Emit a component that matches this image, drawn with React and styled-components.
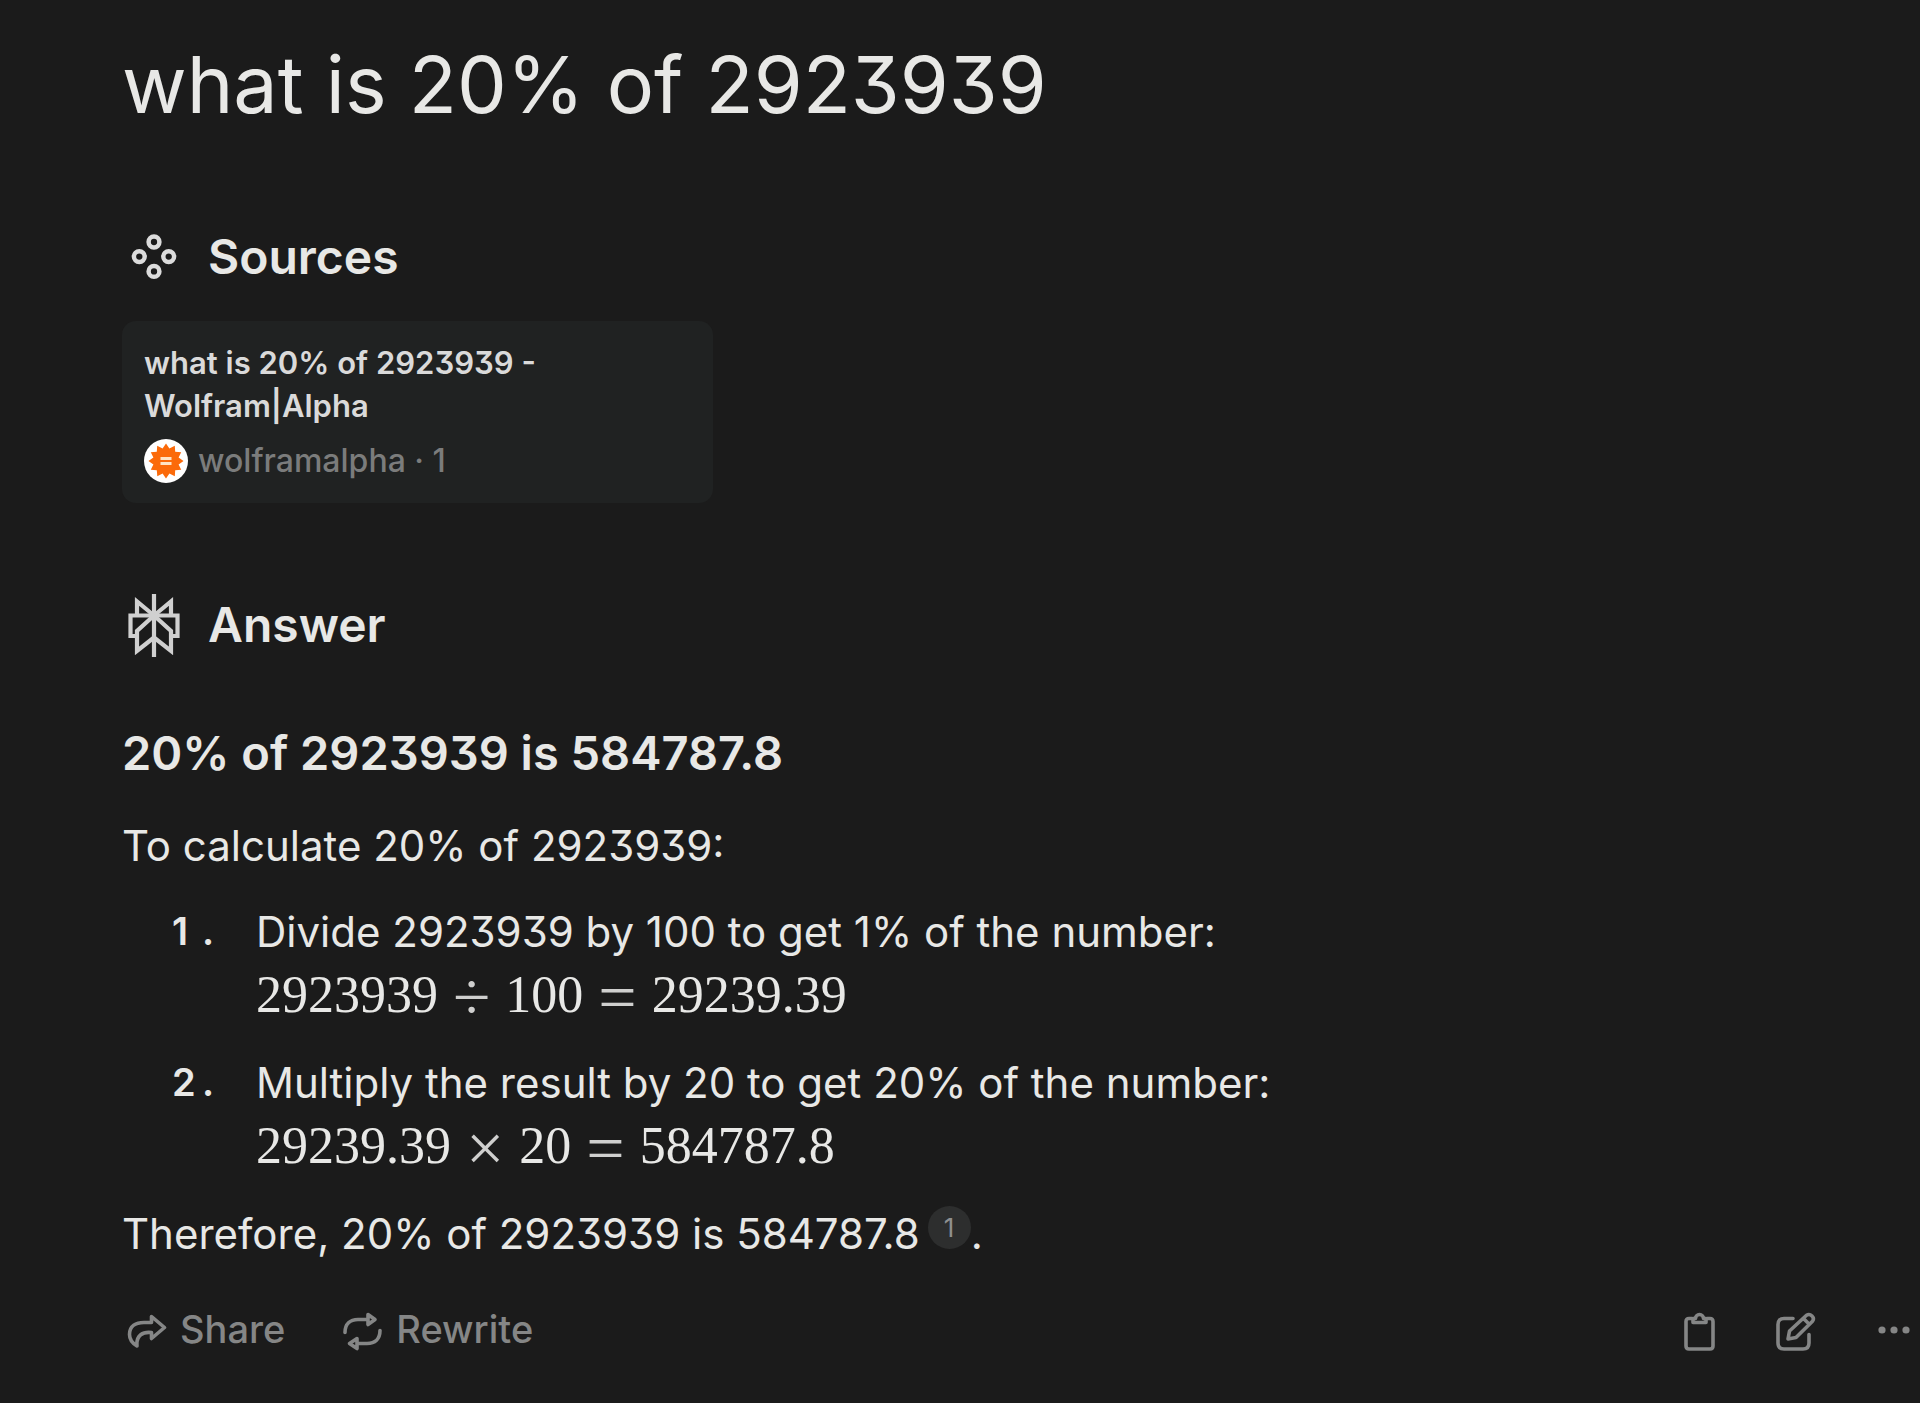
import React from "react";
import styled, { createGlobalStyle } from "styled-components";

const Global = createGlobalStyle`
  * { box-sizing: border-box; }
  body {
    margin: 0;
    background: #1b1b1b;
    color: #e8e8e6;
    font-family: Inter, "Liberation Sans", sans-serif;
    font-feature-settings: "cv09";
  }
  h1, h2, h3, p, ol { margin: 0; padding: 0; }
  a, button { font: inherit; font-feature-settings: inherit; text-decoration: none; }
`;

const Page = styled.main`
  padding: 36px 9px 48px 122px;
`;

const Title = styled.h1`
  font-size: 79px;
  line-height: 96px;
  font-weight: 400;
`;

const Section = styled.section`
  margin-top: ${(p) => p.$space}px;
`;

const SectionHead = styled.div`
  display: flex;
  align-items: center;
  gap: 28px;
  height: 48px;
  padding-left: 6px;
  svg { flex: none; }
`;

const SectionTitle = styled.h2`
  font-size: 48px;
  line-height: 48px;
  font-weight: 600;
`;

const SourceCard = styled.a`
  display: block;
  max-width: 591px;
  margin-top: 40px;
  padding: 20px 22px;
  border-radius: 14px;
  background: #202222;
  color: #dadada;
`;

const SourceTitle = styled.div`
  font-size: 31px;
  line-height: 43px;
  font-weight: 600;
`;

const SourceMeta = styled.div`
  display: flex;
  align-items: center;
  gap: 10px;
  margin-top: 12px;
  font-size: 32px;
  line-height: 44px;
  font-weight: 500;
  color: #7b7c7c;
`;

const AnswerTitle = styled.h3`
  margin-top: 76px;
  font-size: 47px;
  line-height: 56px;
  font-weight: 600;
`;

const Prose = styled.div`
  display: flex;
  flex-direction: column;
  gap: 21px;
  margin-top: 32px;
  font-size: 42px;
  line-height: 65px;
`;

const Steps = styled.ol`
  display: flex;
  flex-direction: column;
  gap: 21px;
  list-style: none;
`;

const Step = styled.li`
  display: flex;
`;

const Marker = styled.span`
  display: grid;
  grid-template-columns: 30px auto;
  flex: none;
  width: 134px;
  padding-left: 50px;
  font-size: 38px;
  font-weight: 600;
`;

const Formula = styled.div`
  height: 65px;
`;

const Digits = styled.span`
  font-family: "Liberation Serif", serif;
  font-size: 52px;
  line-height: 0;
`;

const Operator = styled.span`
  margin: 0 15px;
  font-family: "Liberation Serif", serif;
  font-size: 68px;
  line-height: 0;
  vertical-align: -8px;
  color: #cfcfce;
`;

const Citation = styled.a`
  display: inline-block;
  width: 43px;
  height: 43px;
  margin-left: 8px;
  border-radius: 50%;
  background: #2d2e2e;
  color: #8f9090;
  font-size: 26px;
  line-height: 43px;
  text-align: center;
  vertical-align: 12px;
`;

const Final = styled.p`
  height: 65px;
`;

const Footer = styled.footer`
  display: flex;
  justify-content: space-between;
  margin-top: 39px;
  padding-left: 5px;
`;

const Actions = styled.div`
  display: flex;
  gap: ${(p) => p.$gap}px;
`;

const Action = styled.button`
  display: flex;
  align-items: center;
  gap: 13px;
  padding: 0;
  border: 0;
  background: none;
  color: #858686;
  font-size: 38px;
  font-weight: 500;
  line-height: 48px;
  cursor: pointer;
  svg { display: block; box-sizing: content-box; padding-top: 4px; }
`;

const stroke = { fill: "none", stroke: "currentColor", strokeLinejoin: "round", strokeLinecap: "round" };

function SourcesIcon() {
  return (
    <svg width="52" height="52" viewBox="0 0 52 52" fill="none" stroke="#dcdcdc" strokeWidth="4.500" aria-hidden="true">
      <circle cx="26" cy="11" r="5.4" />
      <circle cx="11.3" cy="25.6" r="5.4" />
      <circle cx="40.7" cy="25.6" r="5.4" />
      <circle cx="26" cy="40.4" r="5.4" />
    </svg>
  );
}

function AnswerIcon() {
  return (
    <svg width="52" height="64" viewBox="0 0 52 64" fill="none" stroke="#d0d0d0" strokeWidth="4.200" aria-hidden="true">
      <path d="M26 1V64" />
      <path d="M26 22.500L9 8.500V22.500M26 22.500L43 8.500V22.500" />
      <path d="M9 43H2.500V22.500H49.500V43H43" />
      <path d="M26 22.500L9 38V58L26 44.500L43 58V38L26 22.500" />
    </svg>
  );
}

function WolframIcon() {
  const spikes = 12;
  const points = Array.from({ length: spikes * 2 }, (_, i) => {
    const r = i % 2 ? 13 : 17.5;
    const a = (Math.PI * i) / spikes - Math.PI / 2;
    return `${(22 + r * Math.cos(a)).toFixed(1)},${(22 + r * Math.sin(a)).toFixed(1)}`;
  }).join(" ");
  return (
    <svg width="44" height="44" viewBox="0 0 44 44" aria-hidden="true">
      <circle cx="22" cy="22" r="22" fill="#fff" />
      <polygon points={points} fill="#fb6a0a" />
      <path d="M16.500 19.500H27.500M16.500 24.500H27.500" stroke="#ffe3c4" strokeWidth="3" />
    </svg>
  );
}

function ShareIcon() {
  return (
    <svg width="40" height="37" viewBox="0 0 40 37" {...stroke} strokeWidth="3.600" aria-hidden="true">
      <path d="M24.500 3.500L37.500 14.500L24.500 25.500V19.500C16 18.500 9 22 10 33C5 30 2.500 26.500 2.500 21.500C2.500 13 9 9.500 17 9.500H24.500Z" />
    </svg>
  );
}

function RewriteIcon() {
  return (
    <svg width="40" height="39" viewBox="0 0 40 39" {...stroke} strokeWidth="3.600" aria-hidden="true">
      <path d="M2 20.500C2 12 7 7.500 15 7.500H25M25 2.500L32 7.500L25 12.500Z" />
      <path d="M37 18.500C37 27 32 31.500 24 31.500H14M14 26.500L6.500 31.500L14 36.500Z" />
    </svg>
  );
}

function ClipboardIcon() {
  return (
    <svg width="31" height="39" viewBox="0 0 31 39" {...stroke} strokeWidth="3.600" aria-hidden="true">
      <path d="M8 6.500H5Q2 6.500 2 9.500V34Q2 37 5 37H26Q29 37 29 34V9.500Q29 6.500 26 6.500H23" />
      <path d="M9 10.500V6.500H11.500A4 4 0 0 1 19.500 6.500H22V10.500Z" />
    </svg>
  );
}

function EditIcon() {
  return (
    <svg width="40" height="39" viewBox="0 0 40 39" {...stroke} strokeWidth="3.600" aria-hidden="true">
      <path d="M17 6.500H8Q2 6.500 2 12.500V31Q2 37 8 37H27Q33 37 33 31V22.500" />
      <path d="M12 27L13.500 19L30.500 3.200Q33.500 1.500 36 4Q38.500 6.500 36.500 9.200L20 25.500Z" />
      <path d="M28 7L33 12" />
    </svg>
  );
}

function MoreIcon() {
  return (
    <svg width="34" height="36" viewBox="0 0 34 36" fill="currentColor" aria-hidden="true">
      <circle cx="5" cy="17" r="3.600" />
      <circle cx="17" cy="17" r="3.600" />
      <circle cx="29" cy="17" r="3.600" />
    </svg>
  );
}

const steps = [
  { text: "Divide 2923939 by 100 to get 1% of the number:", formula: ["2923939", "÷", "100", "=", "29239.39"] },
  { text: "Multiply the result by 20 to get 20% of the number:", formula: ["29239.39", "×", "20", "=", "584787.8"] },
];

export default function App() {
  return (
    <>
      <Global />
      <Page>
        <Title>what is 20% of 2923939</Title>

        <Section $space={101}>
          <SectionHead>
            <SourcesIcon />
            <SectionTitle>Sources</SectionTitle>
          </SectionHead>
          <SourceCard href="#wolframalpha">
            <SourceTitle>what is 20% of 2923939 - Wolfram|Alpha</SourceTitle>
            <SourceMeta>
              <WolframIcon />
              <span>wolframalpha · 1</span>
            </SourceMeta>
          </SourceCard>
        </Section>

        <Section $space={98}>
          <SectionHead>
            <AnswerIcon />
            <SectionTitle>Answer</SectionTitle>
          </SectionHead>
          <AnswerTitle>20% of 2923939 is 584787.8</AnswerTitle>
          <Prose>
            <p>To calculate 20% of 2923939:</p>
            <Steps>
              {steps.map((step, i) => (
                <Step key={step.text}>
                  <Marker>
                    <span>{i + 1}</span>
                    <span>.</span>
                  </Marker>
                  <div>
                    {step.text}
                    <Formula>
                      {step.formula.map((part, n) =>
                        n % 2 ? <Operator key={n}>{part}</Operator> : <Digits key={n}>{part}</Digits>
                      )}
                    </Formula>
                  </div>
                </Step>
              ))}
            </Steps>
            <Final>
              Therefore, 20% of 2923939 is 584787.8
              <Citation href="#wolframalpha">1</Citation>.
            </Final>
          </Prose>
        </Section>

        <Footer>
          <Actions $gap={58}>
            <Action type="button"><ShareIcon />Share</Action>
            <Action type="button"><RewriteIcon />Rewrite</Action>
          </Actions>
          <Actions $gap={61}>
            <Action type="button" aria-label="Copy"><ClipboardIcon /></Action>
            <Action type="button" aria-label="Edit"><EditIcon /></Action>
            <Action type="button" aria-label="More"><MoreIcon /></Action>
          </Actions>
        </Footer>
      </Page>
    </>
  );
}
